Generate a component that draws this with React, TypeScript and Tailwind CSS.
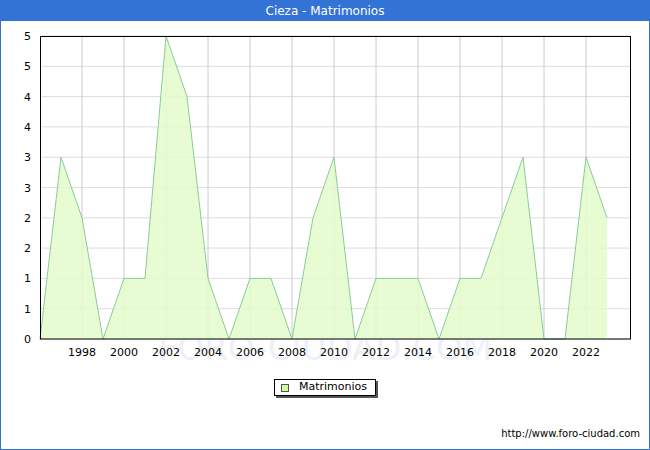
import React from "react";

const values = [0, 3, 2, 0, 1, 1, 5, 4, 1, 0, 1, 1, 0, 2, 3, 0, 1, 1, 1, 0, 1, 1, 2, 3, 0, 0, 3, 2];
const X0 = 40;
const STEP = 21;
const Y0 = 338;
const YTOP = 35;
const yOf = (v: number) => Y0 - (v / 5) * (Y0 - YTOP);

const Chart: React.FC = () => {
  const pts = values.map((v, i) => `${X0 + i * STEP},${yOf(v)}`);
  const lastX = X0 + (values.length - 1) * STEP;
  const grid = Array.from({ length: 11 }, (_, i) => i);
  const years = Array.from({ length: 13 }, (_, i) => 1998 + i * 2);
  return (
    <svg width={648} height={340} viewBox="1 20 648 340" className="block">
      <text x={325} y={359} textAnchor="middle" fontSize={34} fill="#eef0f8" fontFamily="Verdana, 'DejaVu Sans', sans-serif">
        FORO-CIUDAD.COM
      </text>
      {grid.map((i) => (
        <line key={i} x1={40} x2={630} y1={Y0 - i * 30.3} y2={Y0 - i * 30.3} stroke="#dddddd" />
      ))}
      {years.map((y) => {
        const x = X0 + (y - 1996) * STEP;
        return <line key={y} x1={x} x2={x} y1={YTOP} y2={Y0} stroke="#cccccc" />;
      })}
      <polygon points={`${X0},${Y0} ${pts.join(" ")} ${lastX},${Y0}`} fill="#e4fccc" fillOpacity={0.85} />
      <polyline points={pts.join(" ")} fill="none" stroke="#88cc99" strokeWidth={1} />
      <rect x={40.5} y={35.5} width={590} height={302.5} fill="none" stroke="#000" />
      {grid.map((i) => (
        <text key={i} x={31} y={Y0 - i * 30.3 + 4} textAnchor="end" fontSize={11} fontFamily="'DejaVu Sans', sans-serif" fill="#000">
          {Math.ceil(i / 2)}
        </text>
      ))}
      {years.map((y) => (
        <text key={y} x={X0 + (y - 1996) * STEP} y={355} textAnchor="middle" fontSize={11} fontFamily="'DejaVu Sans', sans-serif" fill="#000">
          {y}
        </text>
      ))}
    </svg>
  );
};

export default function App() {
  return (
    <div className="w-[650px] h-[450px] bg-[#3373d6] px-px pb-px flex flex-col" style={{ fontFamily: "'DejaVu Sans', sans-serif" }}>
      <div className="h-[21px] flex items-center justify-center text-white text-[12px]">Cieza - Matrimonios</div>
      <div className="flex-1 bg-white flex flex-col">
        <Chart />
        <div className="flex justify-center mt-[18px]">
          <div className="flex items-center gap-[10px] border border-black pl-[6px] pr-[8px] h-[17px] text-[11px] shadow-[2px_2px_0_#555]">
            <span className="w-[8px] h-[8px] bg-[#ccff99] border border-[#555]" />
            Matrimonios
          </div>
        </div>
        <div className="mt-auto mb-[8px] pr-[9px] text-right text-[10px]">http://www.foro-ciudad.com</div>
      </div>
    </div>
  );
}
